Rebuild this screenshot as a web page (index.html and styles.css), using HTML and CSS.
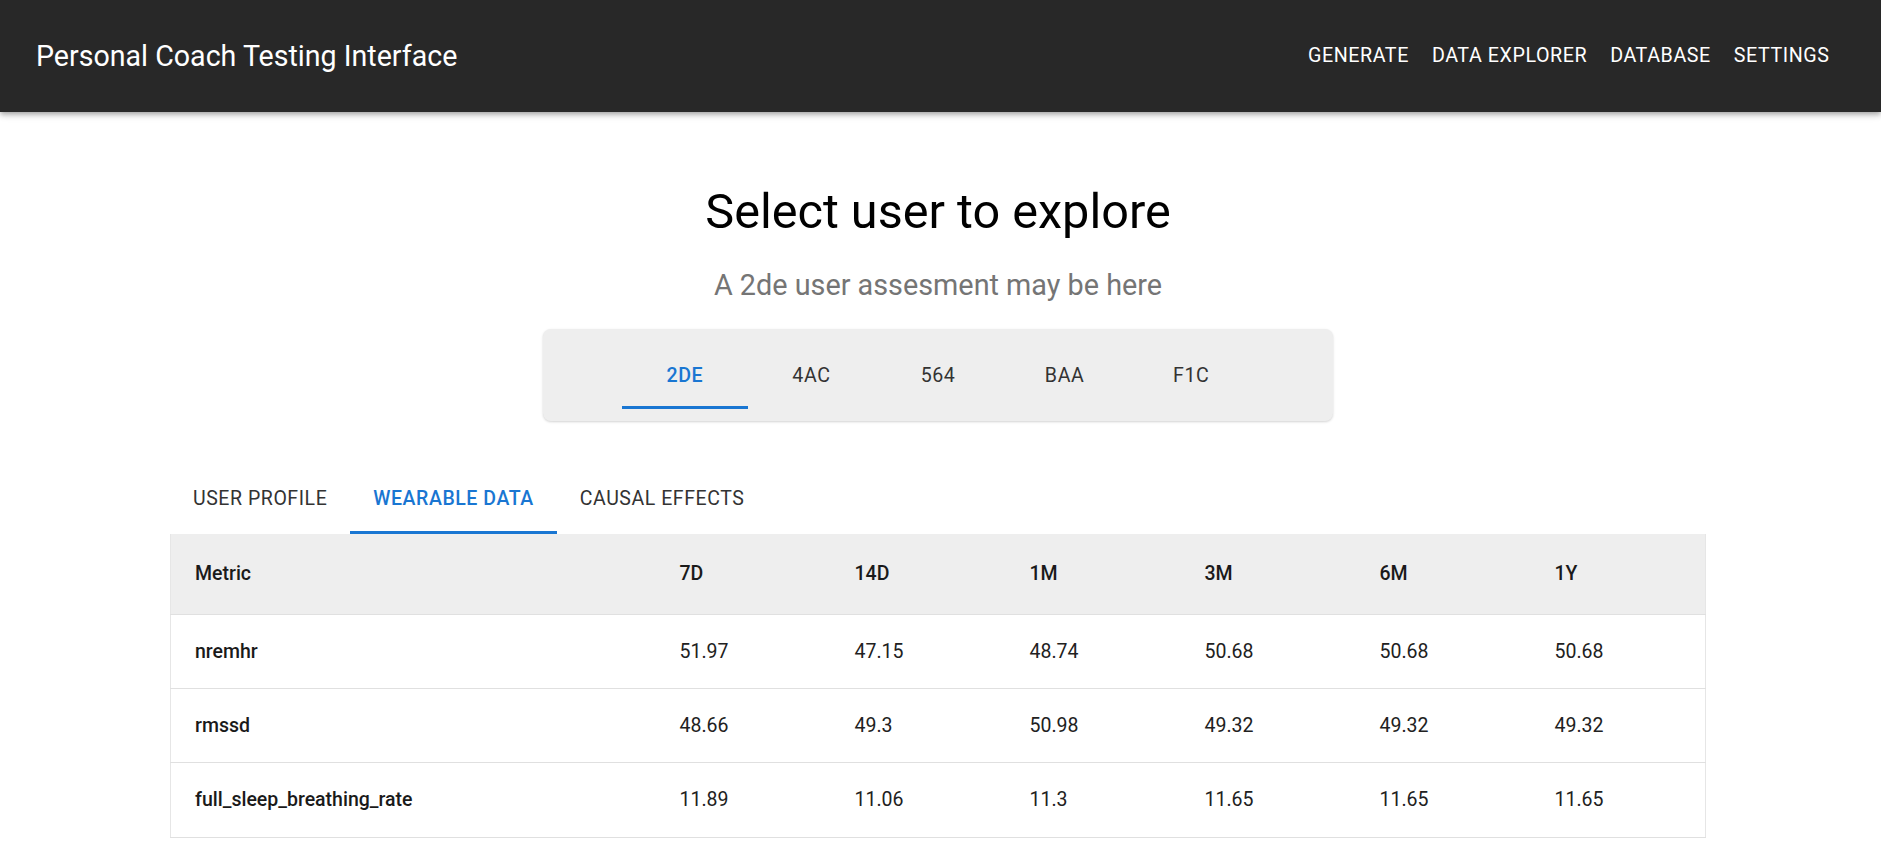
FILE: index.html
```html
<!DOCTYPE html>
<html lang="en">
<head>
<meta charset="utf-8">
<title>Personal Coach Testing Interface</title>
<link rel="stylesheet" href="styles.css">
</head>
<body>
<header class="appbar">
  <div class="brand">Personal Coach Testing Interface</div>
  <nav class="nav">
    <a class="nav-btn" href="#">GENERATE</a>
    <a class="nav-btn" href="#">DATA EXPLORER</a>
    <a class="nav-btn" href="#">DATABASE</a>
    <a class="nav-btn" href="#">SETTINGS</a>
  </nav>
</header>
<main class="main">
  <h1 class="title">Select user to explore</h1>
  <p class="subtitle">A 2de user assesment may be here</p>
  <div class="user-box">
    <div class="user-tabs">
      <button class="user-tab active">2DE</button>
      <button class="user-tab">4AC</button>
      <button class="user-tab">564</button>
      <button class="user-tab">BAA</button>
      <button class="user-tab">F1C</button>
    </div>
  </div>
  <div class="section-tabs">
    <button class="section-tab">USER PROFILE</button>
    <button class="section-tab active">WEARABLE DATA</button>
    <button class="section-tab">CAUSAL EFFECTS</button>
  </div>
  <table class="data-table">
    <colgroup>
      <col class="col-metric">
      <col class="col-val"><col class="col-val"><col class="col-val">
      <col class="col-val"><col class="col-val"><col class="col-val">
    </colgroup>
    <thead>
      <tr><th>Metric</th><th>7D</th><th>14D</th><th>1M</th><th>3M</th><th>6M</th><th>1Y</th></tr>
    </thead>
    <tbody>
      <tr><td class="metric">nremhr</td><td>51.97</td><td>47.15</td><td>48.74</td><td>50.68</td><td>50.68</td><td>50.68</td></tr>
      <tr><td class="metric">rmssd</td><td>48.66</td><td>49.3</td><td>50.98</td><td>49.32</td><td>49.32</td><td>49.32</td></tr>
      <tr><td class="metric">full_sleep_breathing_rate</td><td>11.89</td><td>11.06</td><td>11.3</td><td>11.65</td><td>11.65</td><td>11.65</td></tr>
    </tbody>
  </table>
</main>
</body>
</html>
```
FILE: styles.css
```css
* { box-sizing: border-box; }
html, body { margin: 0; padding: 0; background: #ffffff; }
body {
  font-family: Roboto, "Liberation Sans", Arial, sans-serif;
  color: #212121;
}

.appbar {
  height: 112px;
  background: #282828;
  color: #ffffff;
  display: flex;
  align-items: center;
  justify-content: space-between;
  padding: 0 40px 0 36px;
  box-shadow: 0 2px 4px -1px rgba(0,0,0,0.2), 0 4px 5px 0 rgba(0,0,0,0.14), 0 1px 10px 0 rgba(0,0,0,0.12);
  position: relative;
  z-index: 2;
}
.brand {
  font-size: 28.6px;
  font-weight: 400;
  line-height: 34px;
}
.nav { display: flex; }
.nav-btn {
  color: #ffffff;
  text-decoration: none;
  font-size: 19.7px;
  font-weight: 400;
  letter-spacing: 0.56px;
  line-height: 24px;
  padding: 0 11.5px;
}

.main {
  padding: 0 175px 0 170px;
}
.title {
  margin: 72px 0 0;
  font-size: 48.6px;
  line-height: 56px;
  font-weight: 400;
  text-align: center;
  color: #000000;
}
.subtitle {
  margin: 28px 0 0;
  font-size: 28.8px;
  line-height: 34px;
  text-align: center;
  color: #757575;
}

.user-box {
  width: 790px;
  margin: 27px auto 0;
  background: #eeeeee;
  border-radius: 8px;
  padding: 12px 0;
  box-shadow: 0 1px 3px rgba(0,0,0,0.12), 0 1px 2px rgba(0,0,0,0.06);
}
.user-tabs {
  display: flex;
  justify-content: center;
}
.user-tab {
  width: 126.6px;
  border: 0;
  background: transparent;
  font-family: inherit;
  font-size: 19.6px;
  line-height: 24px;
  letter-spacing: 0.56px;
  font-weight: 400;
  color: #333333;
  padding: 23px 0 18px;
  border-bottom: 3px solid transparent;
  cursor: pointer;
}
.user-tab.active {
  color: #1976d2;
  font-weight: 500;
  border-bottom-color: #1976d2;
}

.section-tabs {
  display: flex;
  margin-top: 52px;
}
.section-tab {
  border: 0;
  background: transparent;
  font-family: inherit;
  font-size: 19.5px;
  line-height: 24px;
  letter-spacing: 0.56px;
  font-weight: 400;
  color: #333333;
  padding: 14px 23px 20px;
  border-bottom: 3px solid transparent;
  cursor: pointer;
}
.section-tab.active {
  color: #1976d2;
  font-weight: 500;
  border-bottom-color: #1976d2;
}

.data-table {
  width: 100%;
  border-collapse: collapse;
  table-layout: fixed;
  border-left: 1px solid #e6e6e6;
  border-right: 1px solid #e6e6e6;
}
.col-metric { width: 485px; }
.col-val { width: 175px; }
.data-table th {
  background: #eeeeee;
  height: 80px;
  padding: 0 24px;
  text-align: left;
  font-size: 19.5px;
  font-weight: 500;
  color: #1a1a1a;
  border-bottom: 1px solid #e0e0e0;
}
.data-table td {
  height: 74.4px;
  padding: 0 24px;
  font-size: 19.5px;
  color: #212121;
  border-bottom: 1px solid #e0e0e0;
}
.data-table td.metric {
  font-weight: 500;
  color: #1a1a1a;
}
```
